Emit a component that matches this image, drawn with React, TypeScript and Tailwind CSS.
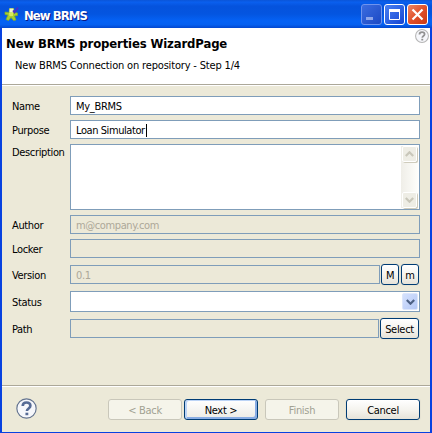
import type { ReactNode } from 'react';

const tahoma = "font-['DejaVu_Sans_Condensed','DejaVu_Sans',sans-serif] [font-stretch:condensed]";

function Label({ children, height = 'h-[19px]' }: { children: ReactNode; height?: string }) {
  return (
    <label className={`flex w-[59px] shrink-0 items-center pt-[2px] pl-px tracking-[-0.35px] whitespace-nowrap ${height}`}>{children}</label>
  );
}

function Field({ children, disabled = false, spacing = 'tracking-[-0.3px]' }: { children?: ReactNode; disabled?: boolean; spacing?: string }) {
  return (
    <div
      className={`flex h-[19px] flex-1 items-center border border-[#7f9db9] pt-px pl-[5px] whitespace-nowrap ${spacing} ${
        disabled ? 'bg-[#ece9d8] text-[#aca899]' : 'bg-white text-black'
      }`}
    >
      {children}
    </div>
  );
}

function Button({ children, className, kind = 'normal' }: { children: ReactNode; className: string; kind?: 'normal' | 'default' | 'disabled' }) {
  const look = {
    normal: 'border-[#003c74] bg-linear-to-b from-white via-[#f5f4ef] to-[#e6e3d9] text-black shadow-[0_0_0_1px_#e6e3d3]',
    default:
      'border-[#003c74] bg-linear-to-b from-white to-[#ecebe5] text-black shadow-[inset_2px_1px_0_#bcd4f6,inset_-2px_-2px_0_#89ade4]',
    disabled: 'border-[#c9c7ba] bg-[#f5f4ea] text-[#a1a192]',
  }[kind];
  return (
    <button className={`flex h-[21px] shrink-0 items-center justify-center rounded-[3px] border pt-[2px] tracking-[-0.3px] whitespace-nowrap ${look} ${className}`}>
      {children}
    </button>
  );
}

function ScrollButton({ up = false }: { up?: boolean }) {
  return (
    <div className="flex h-[16px] w-[15px] items-center justify-center rounded-[2px] border border-white bg-[#eeede5] shadow-[1px_1px_0_#cfccbc]">
      <svg width="9" height="6" viewBox="0 0 9 6" className={up ? '' : 'rotate-180'}>
        <path d="M0.8 5 4.5 1.3 8.2 5" fill="none" stroke="#c9c7ba" strokeWidth="2.2" />
      </svg>
    </div>
  );
}

function HelpIcon({ size, ring, mark, width }: { size: number; ring: string; mark: string; width: number }) {
  return (
    <svg width={size} height={size} viewBox="0 0 20 20">
      <circle cx="10" cy="10" r="9.2" fill="#f6f7fb" stroke={ring} strokeWidth={width} />
      <path d="M6.4 7.7C6.4 5.3 7.9 4.3 10 4.3s3.7 1.2 3.7 3.1c0 2.6-3.3 2.5-3.3 5" fill="none" stroke={mark} strokeWidth="2.5" />
      <rect x="9" y="14" width="2.7" height="2.4" fill={mark} />
    </svg>
  );
}

function AppIcon() {
  return (
    <svg width="16" height="16" viewBox="0 0 16 16">
      <path d="M5.500 2.500h4l.5 4 3.500.5v2.500l-3 .5 1.500 4-2.500.5-2.500-3-2.500 3-2.500-1 2-4.500-3-.5V6l4 .5z" fill="#a9cf2f" stroke="#7fae25" strokeWidth="0.7" />
      <path d="M5.500 2.500h4v4h-4z" fill="#f5f6c8" />
      <path d="M5 7h4v3H5.500z" fill="#dbe85c" />
      <path d="M9 4.500 10.500 6.500 14 1.500" fill="none" stroke="#4a2bc6" strokeWidth="1.700" />
    </svg>
  );
}

const caption = 'flex size-[21px] items-center justify-center rounded-[3px] border';

export default function App() {
  return (
    <div className={`flex h-[433px] w-[432px] flex-col overflow-hidden bg-[#0842e0] text-[11px] leading-[13px] text-black ${tahoma}`}>
      <header className="flex h-[28px] shrink-0 items-center bg-[linear-gradient(180deg,#0b55d8_0%,#0a5fee_8%,#0553dd_22%,#0455e0_50%,#0562f5_75%,#0560f0_88%,#0347cf_100%)] pr-[4px] pl-[4px]">
        <AppIcon />
        <h1 className="ml-[4px] flex-1 pt-[2px] text-[13px] font-bold tracking-[-0.95px] whitespace-nowrap text-white [text-shadow:1px_1px_0_#0a1883]">New BRMS</h1>
        <div className="flex gap-[2px] pt-[1px]">
          <div className={`${caption} border-[#6f94ee] bg-linear-to-br from-[#3b6ce0] to-[#1c49c4]`}>
            <svg width="19" height="19"><rect x="4" y="12" width="7" height="3" fill="#8ea6ea" /></svg>
          </div>
          <div className={`${caption} border-white bg-linear-to-br from-[#4b80f2] to-[#1543d2]`}>
            <svg width="19" height="19"><path d="M4.500 5v9.500h10V5" fill="none" stroke="#fff" /><path d="M4 4h11v3H4z" fill="#fff" /></svg>
          </div>
          <div className={`${caption} border-white bg-linear-to-br from-[#ee8563] via-[#e0502b] to-[#c93812]`}>
            <svg width="19" height="19"><path d="m4.500 4.500 10 10m0-10-10 10" stroke="#fff" strokeWidth="2.200" /></svg>
          </div>
        </div>
      </header>

      <main className="mr-[2px] mb-px ml-[2px] flex flex-1 flex-col bg-[#ece9d8]">
        <section className="flex h-[57px] shrink-0 justify-between border-b border-[#aca899] bg-white">
          <div>
            <h2 className="mt-[8px] ml-[4px] text-[13px] leading-[16px] font-bold tracking-[-0.15px] whitespace-nowrap">New BRMS properties WizardPage</h2>
            <p className="mt-[7px] ml-[13px] tracking-[-0.17px] whitespace-nowrap">New BRMS Connection on repository - Step 1/4</p>
          </div>
          <div className="mt-[1px] mr-[1px]">
            <HelpIcon size={14} ring="#b5b5b5" mark="#929292" width={1.5} />
          </div>
        </section>

        <form className="flex h-[300px] shrink-0 flex-col border-t border-white pr-[10px] pl-[9px]">
          <div className="mt-[10px] flex"><Label>Name</Label><Field>My_BRMS</Field></div>
          <div className="mt-[5px] flex">
            <Label>Purpose</Label>
            <Field spacing="tracking-[-0.42px]">Loan Simulator<span className="ml-px h-[13px] w-px bg-black" /></Field>
          </div>
          <div className="mt-[5px] flex">
            <Label height="h-[14px]">Description</Label>
            <div className="flex h-[66px] flex-1 justify-end border border-[#7f9db9] bg-white p-px">
              <div className="flex w-[17px] flex-col items-center justify-between bg-linear-to-r from-[#efeee8] to-[#fefefb]">
                <ScrollButton up />
                <ScrollButton />
              </div>
            </div>
          </div>
          <div className="mt-[5px] flex"><Label>Author</Label><Field disabled spacing="tracking-[-0.38px]">m@company.com</Field></div>
          <div className="mt-[5px] flex"><Label>Locker</Label><Field disabled /></div>
          <div className="mt-[6px] flex items-center">
            <Label height="h-[21px]">Version</Label>
            <Field disabled>0.1</Field>
            <Button className="ml-[1px] w-[18px]">M</Button>
            <Button className="mr-[1px] ml-[2px] w-[18px]">m</Button>
          </div>
          <div className="mt-[6px] flex">
            <Label height="h-[21px]">Status</Label>
            <div className="flex h-[21px] flex-1 items-center justify-end border border-[#7f9db9] bg-white pr-px">
              <div className="flex h-[17px] w-[16px] items-center justify-center rounded-[2px] border border-[#dce6fb] bg-linear-to-br from-[#d5e1fd] to-[#b4c8f6]">
                <svg width="9" height="6"><path d="m.8 1 3.700 3.700L8.200 1" fill="none" stroke="#4d6185" strokeWidth="2.200" /></svg>
              </div>
            </div>
          </div>
          <div className="mt-[6px] flex items-center">
            <Label height="h-[21px]">Path</Label>
            <Field disabled />
            <Button className="mr-[1px] ml-[1px] w-[39px]">Select</Button>
          </div>
        </form>

        <footer className="flex flex-1 border-t border-[#aca899] shadow-[inset_0_1px_0_#fff]">
          <div className="mt-[12px] ml-[14px] w-[92px]"><HelpIcon size={21} ring="#63738f" mark="#566b95" width={1.1} /></div>
          <div className="mt-[13px] flex">
            <Button kind="disabled" className="w-[74px]">&lt; Back</Button>
            <Button kind="default" className="ml-[2px] w-[74px]">Next &gt;</Button>
            <Button kind="disabled" className="ml-[7px] w-[74px]">Finish</Button>
            <Button className="ml-[7px] w-[74px]">Cancel</Button>
          </div>
        </footer>
      </main>
    </div>
  );
}
